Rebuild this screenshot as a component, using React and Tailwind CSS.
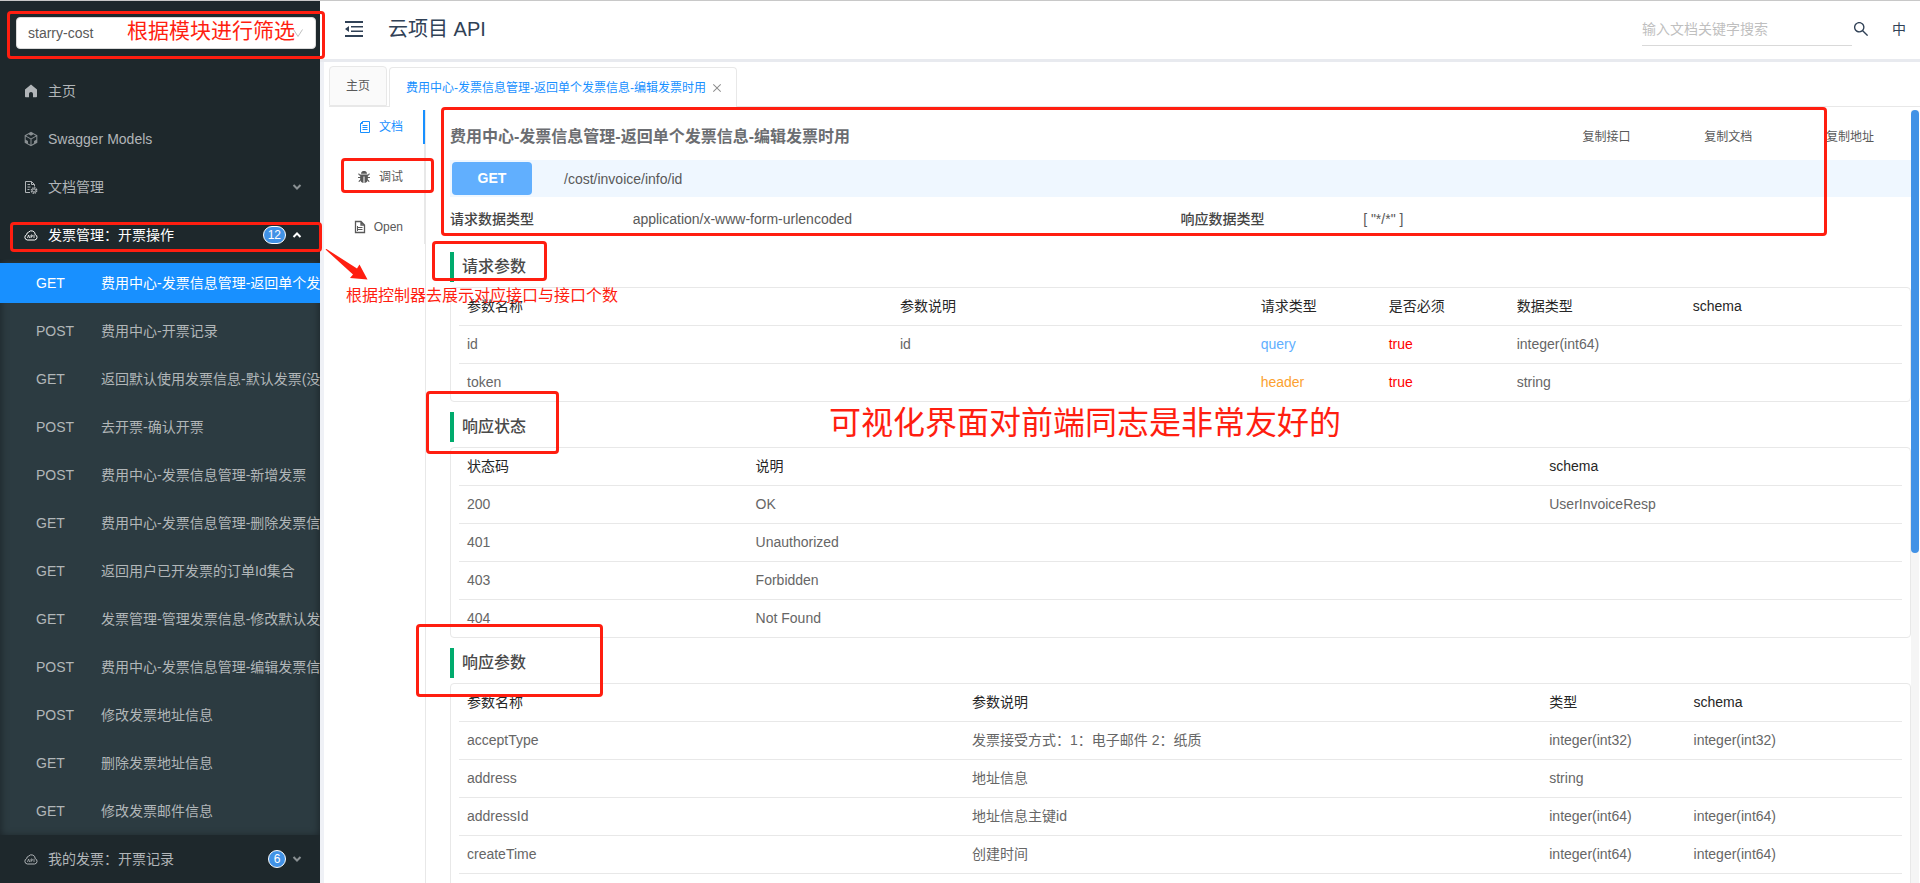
import React from 'react';
import { AiFillBug, AiOutlineClose, AiOutlineCodeSandbox, AiOutlineSearch } from 'react-icons/ai';

const METHODS = [
  { method: 'GET', name: '费用中心-发票信息管理-返回单个发票信息-编辑发票时用', active: true },
  { method: 'POST', name: '费用中心-开票记录' },
  { method: 'GET', name: '返回默认使用发票信息-默认发票(没有返回空)' },
  { method: 'POST', name: '去开票-确认开票' },
  { method: 'POST', name: '费用中心-发票信息管理-新增发票' },
  { method: 'GET', name: '费用中心-发票信息管理-删除发票信息' },
  { method: 'GET', name: '返回用户已开发票的订单Id集合' },
  { method: 'GET', name: '发票管理-管理发票信息-修改默认发票' },
  { method: 'POST', name: '费用中心-发票信息管理-编辑发票信息' },
  { method: 'POST', name: '修改发票地址信息' },
  { method: 'GET', name: '删除发票地址信息' },
  { method: 'GET', name: '修改发票邮件信息' },
];

const REQUEST_PARAMS = {
  widths: ['w-[30%]', 'w-[25%]', 'w-32', 'w-32', 'w-44', ''],
  head: ['参数名称', '参数说明', '请求类型', '是否必须', '数据类型', 'schema'],
  rows: [
    ['id', 'id', 'query', 'true', 'integer(int64)', ''],
    ['token', '', 'header', 'true', 'string', ''],
  ],
};

const RESPONSE_STATUS = {
  widths: ['w-[20%]', 'w-[55%]', 'w-[25%]'],
  head: ['状态码', '说明', 'schema'],
  rows: [
    ['200', 'OK', 'UserInvoiceResp'],
    ['401', 'Unauthorized', ''],
    ['403', 'Forbidden', ''],
    ['404', 'Not Found', ''],
  ],
};

const RESPONSE_PARAMS = {
  widths: ['w-[35%]', 'w-[40%]', 'w-[10%]', 'w-[15%]'],
  head: ['参数名称', '参数说明', '类型', 'schema'],
  rows: [
    ['acceptType', '发票接受方式：1：电子邮件 2：纸质', 'integer(int32)', 'integer(int32)'],
    ['address', '地址信息', 'string', ''],
    ['addressId', '地址信息主键id', 'integer(int64)', 'integer(int64)'],
    ['createTime', '创建时间', 'integer(int64)', 'integer(int64)'],
    ['email', '邮箱', 'string', ''],
  ],
};

const CELL_COLORS = {
  query: 'text-[#61affe]',
  header: 'text-[#fca130]',
  true: 'text-[#ff0000]',
};

// Icons
const FoldIcon = () => (
  <svg viewBox="0 0 18 16" className="h-4 w-[18px]" fill="currentColor">
    <path d="M0 0h18v2H0zM6 5h12v1.500H6zM6 9.500h12V11H6zM0 14h18v2H0zM4 5v6L0 8z" />
  </svg>
);

const HomeIcon = () => (
  <svg viewBox="0 0 14 14" className="h-3.5 w-3.5" fill="currentColor">
    <path d="M7 .5 1 5.500v7c0 .5.300.8.800.8h3.200V10c0-1.200.9-2 2-2s2 .8 2 2v3.300h3.200c.5 0 .8-.3.8-.8v-7z" />
  </svg>
);

const DocSettingIcon = () => (
  <svg viewBox="0 0 14 14" className="h-3.5 w-3.5" fill="none" stroke="currentColor">
    <path d="M6 12.500H1.500v-11h6l3 3V6.500M7.500 1.500v3h3M3.500 4.500H6M3.500 7H6.500M3.500 9.500H5.500" />
    <circle cx="10" cy="10.500" r="2.700" strokeWidth="1.400" strokeDasharray="1.400 .7" />
    <circle cx="10" cy="10.500" r="1.600" />
  </svg>
);

const CloudApiIcon = () => (
  <svg viewBox="0 0 14 14" className="h-3.5 w-3.5" fill="none" stroke="currentColor">
    <path d="M3.300 12a2.800 2.800 0 0 1-.6-5.400 2.600 2.600 0 0 1 2-2.500 3.700 3.700 0 0 1 6.500 2.500 2.800 2.800 0 0 1-.5 5.400z" />
    <path strokeWidth=".8" d="m3.500 10 1.100-3 1.100 3M7 10V7h.9a.9.900 0 0 1 0 1.700H7M10 6.800V10" />
  </svg>
);

const DocIcon = () => (
  <svg viewBox="0 0 12 14" className="h-3.5 w-3" fill="none" stroke="currentColor">
    <path d="M3.500 1.500h7v11h-9v-9zM3.500 1.500v2h-2M3.500 5.500h5M3.500 7.500h5M3.500 9.500h5" />
  </svg>
);

const OpenIcon = () => (
  <svg viewBox="0 0 12 14" className="h-3.5 w-3" fill="none" stroke="currentColor">
    <path strokeWidth="1.300" d="M1.500 1.500h5.500l3.500 3.500v7.500h-9zM7 1.500V5h3.500" />
    <path d="M3.500 11V6M3.500 7.500h5M3.500 9.500h5" />
  </svg>
);

const Caret = ({ up }) => (
  <svg
    viewBox="0 0 10 10"
    className={`h-2.5 w-2.5 ${up ? '' : 'text-[#8a9093]'}`}
    fill="none"
    stroke="currentColor"
    strokeWidth="2"
  >
    <path d={up ? 'M1.500 7 5 3.500 8.500 7' : 'M1.500 3 5 6.500 8.500 3'} />
  </svg>
);

const MenuRow = ({ icon, label, count, caret, active }) => (
  <a href="#" className={`flex h-12 items-center pr-[18px] pl-6 ${active ? 'text-white' : 'text-[#b1b5b8]'}`}>
    {icon}
    <span className="ml-2.5 flex-1 whitespace-nowrap">{label}</span>
    {count && (
      <span className="mr-1.5 h-[18px] min-w-[18px] rounded-full border border-white bg-[#4192e6] px-1 text-center text-xs leading-4 text-white">
        {count}
      </span>
    )}
    {caret && <Caret up={caret === 'up'} />}
  </a>
);

const Sidebar = () => (
  <aside className="w-80 shrink-0 overflow-hidden bg-[#1e282c]">
    <div className="relative mx-1 px-3 pt-4 pb-[18px] pr-0">
      <select
        aria-label="模块"
        className="h-8 w-[300px] appearance-none rounded border border-[#d9d9d9] bg-white px-[11px] text-sm text-[#595959]"
        defaultValue="starry-cost"
      >
        <option>starry-cost</option>
      </select>
      <svg viewBox="0 0 12 12" className="absolute top-[26px] right-[12px] h-3 w-3" fill="none" stroke="#bfbfbf">
        <path d="m1.500 2.500 4.500 7 4.500-7" />
      </svg>
    </div>
    <nav>
      <MenuRow icon={<HomeIcon />} label="主页" />
      <MenuRow icon={<AiOutlineCodeSandbox size={18} className="-mx-0.5 text-[#8a9093]" />} label="Swagger Models" />
      <MenuRow icon={<DocSettingIcon />} label="文档管理" caret="down" />
      <MenuRow icon={<CloudApiIcon />} label="发票管理：开票操作" count={12} caret="up" active />
      <div className="bg-[#2c3b41] shadow-[inset_0_2px_8px_rgba(0,0,0,0.45)]">
        {METHODS.map((item) => (
          <div key={item.name} className="py-1">
            <a
              href="#"
              className={`flex h-10 items-center overflow-hidden pl-9 whitespace-nowrap ${item.active ? 'bg-[#1890ff] text-white' : 'text-[#b1b6b8]'}`}
            >
              <span className="w-[65px] shrink-0">{item.method}</span>
              <span>{item.name}</span>
            </a>
          </div>
        ))}
      </div>
      <MenuRow icon={<CloudApiIcon />} label="我的发票：开票记录" count={6} caret="down" />
    </nav>
  </aside>
);

const Header = () => (
  <header className="flex h-[61px] shrink-0 items-center border-b-3 border-[#e8eaef] pr-3.5 pb-0.5 pl-[25px] text-[#304156]">
    <button aria-label="折叠菜单">
      <FoldIcon />
    </button>
    <h1 className="ml-[25px] flex-1 text-xl">云项目 API</h1>
    <input
      type="text"
      aria-label="搜索"
      placeholder="输入文档关键字搜索"
      className="h-[34px] w-[210px] border-b border-[#d9d9d9] text-sm placeholder:text-[#bfbfbf]"
    />
    <button aria-label="搜索文档">
      <AiOutlineSearch size={18} />
    </button>
    <button className="ml-[22px] text-sm">中</button>
  </header>
);

const SideTab = ({ icon, label, active }) => (
  <button
    className={`-mr-px flex h-[34px] items-center justify-end gap-2 text-xs ${active ? 'border-r-2 border-[#1890ff] pr-5 text-[#1890ff]' : 'border-r border-[#e8e8e8] pr-[21px] text-[#595959]'}`}
  >
    {icon}
    <span>{label}</span>
  </button>
);

const Section = ({ title, data }) => (
  <section>
    <h3 className="mt-2.5 mb-[5px] h-[30px] border-l-4 border-[#00ab6d] pl-2 text-base leading-[30px] font-medium text-[#4a4a4a]">
      {title}
    </h3>
    <div className="rounded border border-[#e8e8e8] px-2">
      <table className="w-full table-fixed border-separate border-spacing-0 text-left">
        <thead>
          <tr className="h-[38px]">
            {data.head.map((text, i) => (
              <th key={text} className={`border-b border-[#e8e8e8] px-2 pb-0.5 font-normal text-[#262626] ${data.widths[i]}`}>
                {text}
              </th>
            ))}
          </tr>
        </thead>
        <tbody>
          {data.rows.map((row) => (
            <tr key={row[0]} className="group h-[38px] last:h-[37px]">
              {row.map((text, i) => (
                <td
                  key={i}
                  className={`border-b border-[#e8e8e8] px-2 pb-0.5 group-last:border-b-0 ${CELL_COLORS[text] || 'text-[#666]'}`}
                >
                  {text}
                </td>
              ))}
            </tr>
          ))}
        </tbody>
      </table>
    </div>
  </section>
);

const ApiDoc = () => (
  <div className="min-w-0 flex-1 overflow-hidden border-l border-[#e8e8e8] pl-6">
    <div className="grid h-[50px] grid-cols-24 items-center pt-1">
      <h2 className="col-span-18 text-base font-semibold text-[#6b6d71]">
        费用中心-发票信息管理-返回单个发票信息-编辑发票时用
      </h2>
      {['复制接口', '复制文档', '复制地址'].map((label) => (
        <button key={label} className="col-span-2 text-xs text-[#595959]">{label}</button>
      ))}
    </div>
    <div className="flex h-[37px] items-center bg-[#eff7ff]">
      <span className="ml-0.5 h-[33px] w-20 rounded-sm bg-[#61affe] text-center leading-8 font-bold text-white">
        GET
      </span>
      <span className="ml-8 text-[#595959]">/cost/invoice/info/id</span>
    </div>
    <div className="grid h-[45px] grid-cols-24 items-center pb-0.5 text-[#595959]">
      <span className="col-span-3 font-medium text-[#444]">请求数据类型</span>
      <span className="col-span-9">application/x-www-form-urlencoded</span>
      <span className="col-span-3 font-medium text-[#444]">响应数据类型</span>
      <span className="col-span-9">[ "*/*" ]</span>
    </div>
    <Section title="请求参数" data={REQUEST_PARAMS} />
    <Section title="响应状态" data={RESPONSE_STATUS} />
    <Section title="响应参数" data={RESPONSE_PARAMS} />
  </div>
);

// Red notes drawn over the page
const Notes = () => (
  <div className="pointer-events-none text-[#ff1e10]">
    <div className="absolute top-[10px] left-[7px] h-[48px] w-[318px] rounded border-3 border-current" />
    <div className="absolute top-[221px] left-[10px] h-[30px] w-[312px] rounded border-3 border-current" />
    <div className="absolute top-[157px] left-[341px] h-[35px] w-[93px] rounded border-3 border-current" />
    <div className="absolute top-[106px] left-[441px] h-[129px] w-[1386px] rounded border-3 border-current" />
    <div className="absolute top-[240px] left-[432px] h-[40px] w-[115px] rounded border-3 border-current" />
    <div className="absolute top-[390px] left-[426px] h-[63px] w-[133px] rounded border-3 border-current" />
    <div className="absolute top-[623px] left-[416px] h-[73px] w-[187px] rounded border-3 border-current" />
    <svg viewBox="0 0 44 34" className="absolute top-[247px] left-[325px] h-[34px] w-11" fill="currentColor">
      <path d="M.5 1.500 1.500 1 32 20.500l2.500-4L42.500 31.500 25 30l3-3.500z" />
    </svg>
    <p className="absolute top-[16px] left-[127px] text-[21px] leading-7 whitespace-nowrap">根据模块进行筛选</p>
    <p className="absolute top-[283px] left-[346px] text-base whitespace-nowrap">根据控制器去展示对应接口与接口个数</p>
    <p className="absolute top-[402px] left-[829px] text-[32px] leading-10 whitespace-nowrap">
      可视化界面对前端同志是非常友好的
    </p>
  </div>
);

function App() {
  return (
    <div className="relative flex h-screen overflow-hidden border-t border-[#c8c8c8] bg-white font-['Liberation_Sans','Noto_Sans_CJK_SC',sans-serif] text-sm">
      <Sidebar />
      <div className="flex min-w-0 flex-1 flex-col">
        <Header />
        <main className="flex min-h-0 flex-1 flex-col border-l-4 border-[#eff1f6]">
          <div className="mt-[5px] ml-[5px] flex h-10 shrink-0 items-end gap-0.5 border-b border-[#e8e8e8] text-xs">
            <button className="h-10 w-[58px] rounded-t border border-[#e8e8e8] bg-[#fafafa] text-[#595959]">主页</button>
            <div className="-mb-px flex h-10 items-center gap-[5px] rounded-t border border-b-0 border-[#e8e8e8] bg-white pr-[13px] pl-4 text-[#1890ff]">
              <button>费用中心-发票信息管理-返回单个发票信息-编辑发票时用</button>
              <button aria-label="关闭" className="text-[#8c8c8c]">
                <AiOutlineClose size={12} />
              </button>
            </div>
          </div>
          <div className="mt-[3px] flex min-h-0 flex-1">
            <div className="flex w-[101px] shrink-0 flex-col gap-4 self-start border-r border-[#e8e8e8]">
              <SideTab icon={<DocIcon />} label="文档" active />
              <SideTab icon={<AiFillBug size={14} />} label="调试" />
              <SideTab icon={<OpenIcon />} label="Open" />
            </div>
            <ApiDoc />
            <div className="mr-px w-2 shrink-0 bg-[#f5f5f5]">
              <div className="h-[443px] rounded-full bg-[#4192e6]" />
            </div>
          </div>
        </main>
      </div>
      <Notes />
    </div>
  );
}

export default App;
